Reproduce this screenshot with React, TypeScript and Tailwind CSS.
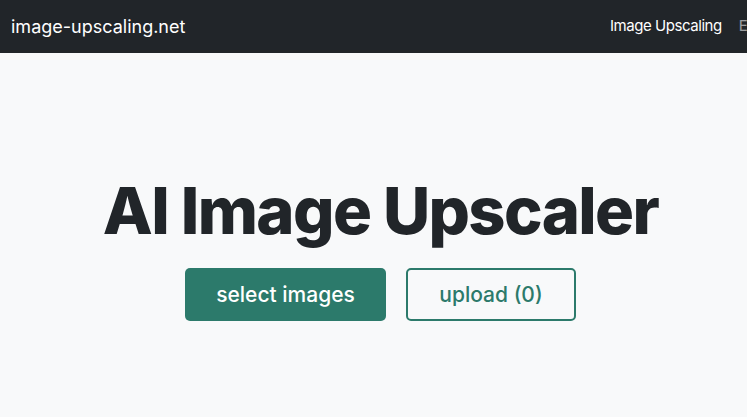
import React from "react";

export default function App() {
  return (
    <div className="min-h-[417px] w-full overflow-hidden bg-[#f8f9fa]" style={{ fontFamily: "Inter, 'Noto Sans', sans-serif" }}>
      <header className="flex h-[53px] items-center overflow-hidden bg-[#212529] pl-[11px] whitespace-nowrap">
        <a className="w-[599px] shrink-0 text-[18px] text-white">image-upscaling.net</a>
        <nav className="flex shrink-0 items-center gap-[17px]">
          <a className="text-[15px] tracking-[-0.03em] text-white">Image Upscaling</a>
          <a className="text-[15px] tracking-[-0.03em] text-white/55">Examples</a>
        </nav>
      </header>
      <main className="flex flex-col items-center pl-[14px] pt-[125px]">
        <h1 className="text-[65px] font-extrabold leading-none tracking-[-0.025em] text-[#212529]">AI Image Upscaler</h1>
        <div className="mt-[25px] flex gap-[20px]">
          <button className="h-[53px] w-[201px] rounded-[5px] bg-[#2c7a6b] text-[21px] font-medium text-white">select images</button>
          <button className="h-[53px] w-[170px] rounded-[5px] border-2 border-[#2c7a6b] bg-transparent text-[21px] font-medium text-[#2c7a6b]">upload (0)</button>
        </div>
      </main>
    </div>
  );
}
